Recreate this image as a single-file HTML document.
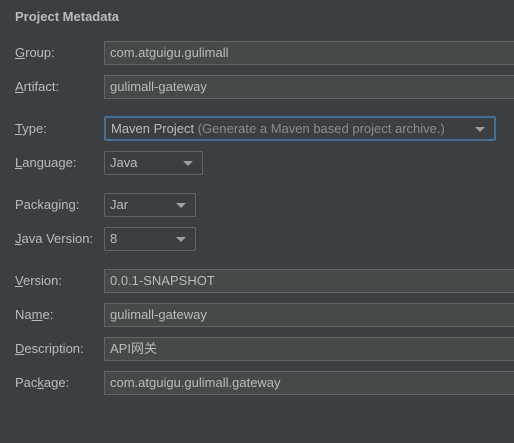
<!DOCTYPE html>
<html><head><meta charset="utf-8"><style>
body{margin:0;width:514px;height:443px;background:#3c3f41;overflow:hidden;position:relative;font-family:"Liberation Sans","Noto Sans CJK SC",sans-serif;font-size:13px;color:#bbbbbb}
.t{position:absolute;left:15px;top:9px;font-weight:bold;font-size:13px;color:#bbbbbb}
.l{position:absolute;left:15px;line-height:16px}
.f{position:absolute;left:104px;box-sizing:border-box;background:#45494a;border:1px solid #646464;line-height:21px;padding-left:5px;white-space:nowrap;overflow:hidden}
.w{width:430px}
.c{border-radius:2px;background:#3c3f41}
.c:after{content:"";position:absolute;right:9px;top:9px;border-left:5px solid transparent;border-right:5px solid transparent;border-top:5px solid #a0a0a0}
u{text-decoration:underline}
.g{color:#8c8c8c}
</style></head><body>
<div class="t">Project Metadata</div>
<div class="l" style="top:45px"><u>G</u>roup:</div>
<div class="f w" style="top:41px;height:24px">com.atguigu.gulimall</div>
<div class="l" style="top:79px"><u>A</u>rtifact:</div>
<div class="f w" style="top:75px;height:24px">gulimall-gateway</div>
<div class="l" style="top:121px"><u>T</u>ype:</div>
<div class="f c" style="top:116px;height:25px;width:392px;border:2px solid #466d94;padding-left:5px;line-height:21px">Maven Project <span class="g">(Generate a Maven based project archive.)</span></div>
<div class="l" style="top:155px"><u>L</u>anguage:</div>
<div class="f c" style="top:151px;height:24px;width:99px">Java</div>
<div class="l" style="top:197px">Packa<u>g</u>ing:</div>
<div class="f c" style="top:193px;height:24px;width:92px">Jar</div>
<div class="l" style="top:231px"><u>J</u>ava Version:</div>
<div class="f c" style="top:227px;height:24px;width:92px">8</div>
<div class="l" style="top:273px"><u>V</u>ersion:</div>
<div class="f w" style="top:269px;height:24px">0.0.1-SNAPSHOT</div>
<div class="l" style="top:307px">Na<u>m</u>e:</div>
<div class="f w" style="top:303px;height:24px">gulimall-gateway</div>
<div class="l" style="top:341px"><u>D</u>escription:</div>
<div class="f w" style="top:337px;height:24px">API网关</div>
<div class="l" style="top:375px">Pac<u>k</u>age:</div>
<div class="f w" style="top:371px;height:24px">com.atguigu.gulimall.gateway</div>
</body></html>
